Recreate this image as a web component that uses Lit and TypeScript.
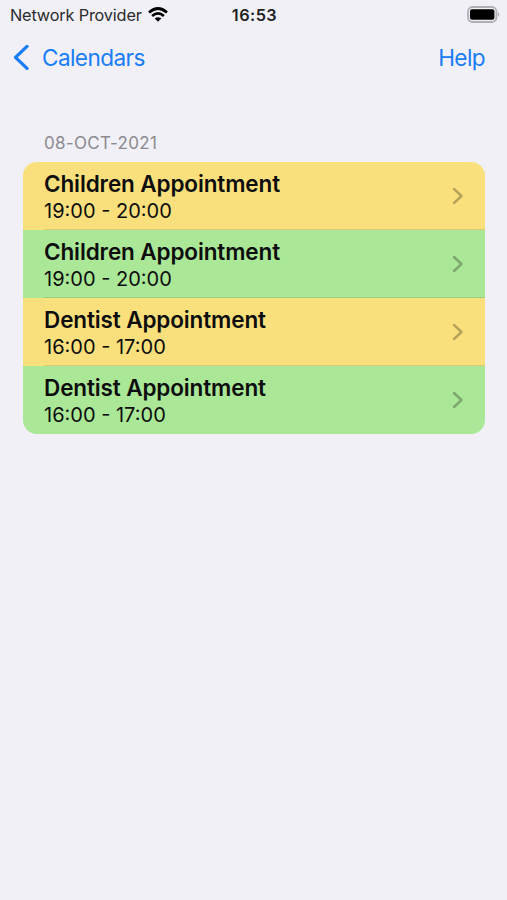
import { LitElement, html, css } from "lit";
import { customElement } from "lit/decorators.js";
import { classMap } from "lit/directives/class-map.js";

const rows = [
  { title: "Children Appointment", time: "19:00 - 20:00", green: false },
  { title: "Children Appointment", time: "19:00 - 20:00", green: true },
  { title: "Dentist Appointment", time: "16:00 - 17:00", green: false },
  { title: "Dentist Appointment", time: "16:00 - 17:00", green: true },
];

@customElement("app-root")
export class AppRoot extends LitElement {
  static styles = css`
    :host { display: block; height: 900px; background: #f1f0f6; overflow: hidden; font-family: Inter, "Liberation Sans", sans-serif; color: #0d0d0d; }
    * { box-sizing: border-box; }
    svg { display: block; }
    span { display: block; white-space: nowrap; }
    .status { height: 30px; display: grid; grid-template-columns: 1fr auto 1fr; align-items: center; padding: 0 7px 0 10px; font-size: 16.3px; }
    .carrier { display: flex; align-items: center; gap: 6px; letter-spacing: -0.17px; color: #2b2b2e; }
    .wifi { margin-bottom: 1px; }
    .clock { font-weight: 600; letter-spacing: 0.45px; color: #222225; margin-right: 1px; }
    .battery { justify-self: end; margin-bottom: 2px; }
    .nav { height: 54px; display: flex; align-items: center; justify-content: space-between; padding: 0 22px 0 13px; color: #1a7df8; font-size: 22.6px; letter-spacing: -0.6px; }
    .back { display: flex; align-items: center; gap: 12px; }
    .date { margin: 49px 0 0 44px; height: 20px; line-height: 20px; font-size: 17px; letter-spacing: 0.3px; color: #8b8a90; }
    .list { margin: 9px 22px 0 23px; border-radius: 14px; overflow: hidden; }
    .row { height: 68px; display: flex; justify-content: space-between; align-items: center; padding: 0 21px; background: #f9e07c; }
    .row.green { background: #aae797; }
    .row:not(:last-child) { background-image: linear-gradient(#0000001c, #0000001c); background-size: calc(100% - 21px) 1px; background-position: right bottom; background-repeat: no-repeat; }
    .title { font-size: 22.5px; font-weight: 600; line-height: 28px; letter-spacing: -0.12px; }
    .time { font-size: 20px; line-height: 25px; position: relative; top: 1px; }
  `;
  render() {
    return html`
      <div class="status">
        <div class="carrier"><span>Network Provider</span>
          <svg class="wifi" width="20" height="15" viewBox="0 0 20 15"><path d="M1 5.4Q10-2.4 19 5.4M4.1 8.9Q10 3.8 15.9 8.9" fill="none" stroke="#000" stroke-width="2.7"/><path d="M6.7 11.6Q10 9 13.3 11.6L10 14.8Z"/></svg>
        </div>
        <span class="clock">16:53</span>
        <svg class="battery" width="33" height="17" viewBox="0 0 33 17"><rect x="1" y="1" width="28.4" height="15" rx="4.5" fill="none" stroke="#b0afb4" stroke-width="1.8"/><rect x="3" y="3.3" width="24.4" height="10.4" rx="2"/><path d="M31 6.3Q33.2 8.5 31 10.7Z" fill="#a5a4a9"/></svg>
      </div>
      <div class="nav">
        <div class="back"><svg width="17" height="26" viewBox="0 0 17 26"><path d="M14 2.4L2.5 13.4L14 24.4" fill="none" stroke="#1a7df8" stroke-width="3.3" stroke-linecap="round" stroke-linejoin="round"/></svg><span>Calendars</span></div>
        <span>Help</span>
      </div>
      <div class="date">08-OCT-2021</div>
      <div class="list">${rows.map((r) => html`
        <div class=${classMap({ row: true, green: r.green })}>
          <div><span class="title">${r.title}</span><span class="time">${r.time}</span></div>
          <svg width="13" height="18" viewBox="0 0 13 18"><path d="M3 2L10.5 9L3 16" fill="none" stroke="#000" stroke-opacity=".27" stroke-width="2.4" stroke-linecap="round" stroke-linejoin="round"/></svg>
        </div>`)}</div>
    `;
  }
}
